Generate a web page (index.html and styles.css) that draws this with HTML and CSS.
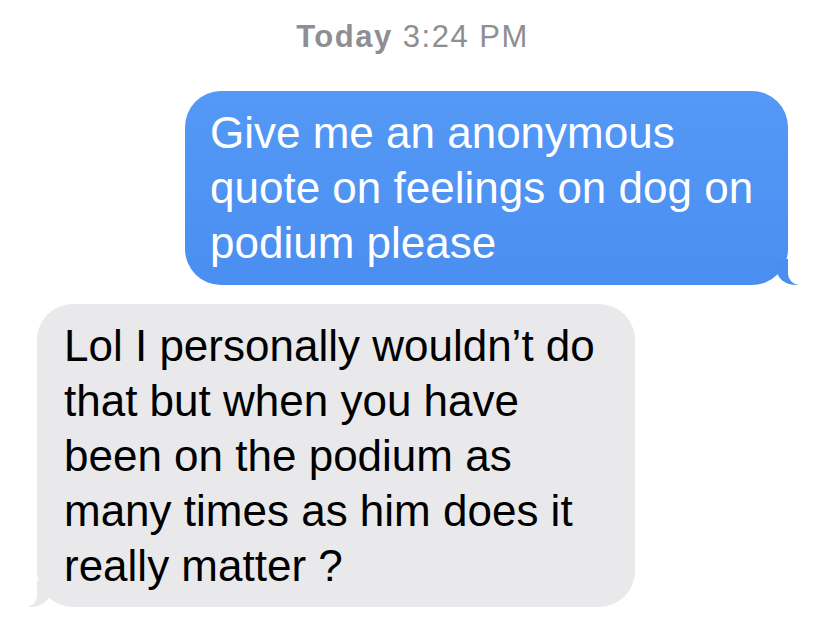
FILE: index.html
```html
<!DOCTYPE html>
<html lang="en">
<head>
    <meta charset="UTF-8">
    <title>Messages</title>
    <link rel="stylesheet" href="styles.css">
</head>
<body>
    <div class="thread">
        <!-- Timestamp -->
        <p class="stamp"><b>Today</b> 3:24 PM</p>

        <!-- Outgoing -->
        <div class="bubble sent">
            Give me an anonymous<br>
            quote on feelings on dog on<br>
            podium please
        </div>

        <!-- Incoming -->
        <div class="bubble received">
            Lol I personally wouldn’t do<br>
            that but when you have<br>
            been on the podium as<br>
            many times as him does it<br>
            really matter ?
        </div>
    </div>
</body>
</html>
```

FILE: styles.css
```css
/* General */
body {
    margin: 0;
    background: #ffffff;
    font-family: "Liberation Sans", Arial, sans-serif;
}

.thread {
    display: flex;
    flex-direction: column;
    padding: 20px 40px 0 37px;
}

/* Timestamp */
.stamp {
    margin: 0 0 37px;
    text-align: center;
    font-size: 31px;
    line-height: 34px;
    letter-spacing: 1.5px;
    color: #8e8e93;
}

.stamp b {
    font-weight: 700;
}

/* Bubbles */
.bubble {
    position: relative;
    box-sizing: border-box;
    font-size: 44px;
    line-height: 55px;
    border-radius: 36px;
}

.sent {
    align-self: flex-end;
    width: 603px;
    padding: 14px 0 15px 25px;
    margin-bottom: 19px;
    color: #ffffff;
    background: linear-gradient(#5599f6, #4a8ef1);
}

.received {
    align-self: flex-start;
    width: 598px;
    padding: 14px 0 14px 27px;
    color: #000000;
    background: #e9e9eb;
}

/* Tails */
.bubble::before,
.bubble::after {
    content: "";
    position: absolute;
    bottom: 0;
    height: 26px;
}

.sent::before {
    right: -11px;
    width: 22px;
    background: #4a8ef1;
    border-bottom-left-radius: 18px 15px;
}

.sent::after {
    right: -26px;
    width: 26px;
    background: #ffffff;
    border-bottom-left-radius: 12px;
}

.received::before {
    left: -9px;
    width: 22px;
    background: #e9e9eb;
    border-bottom-right-radius: 18px 15px;
}

.received::after {
    left: -26px;
    width: 26px;
    background: #ffffff;
    border-bottom-right-radius: 12px;
}
```
